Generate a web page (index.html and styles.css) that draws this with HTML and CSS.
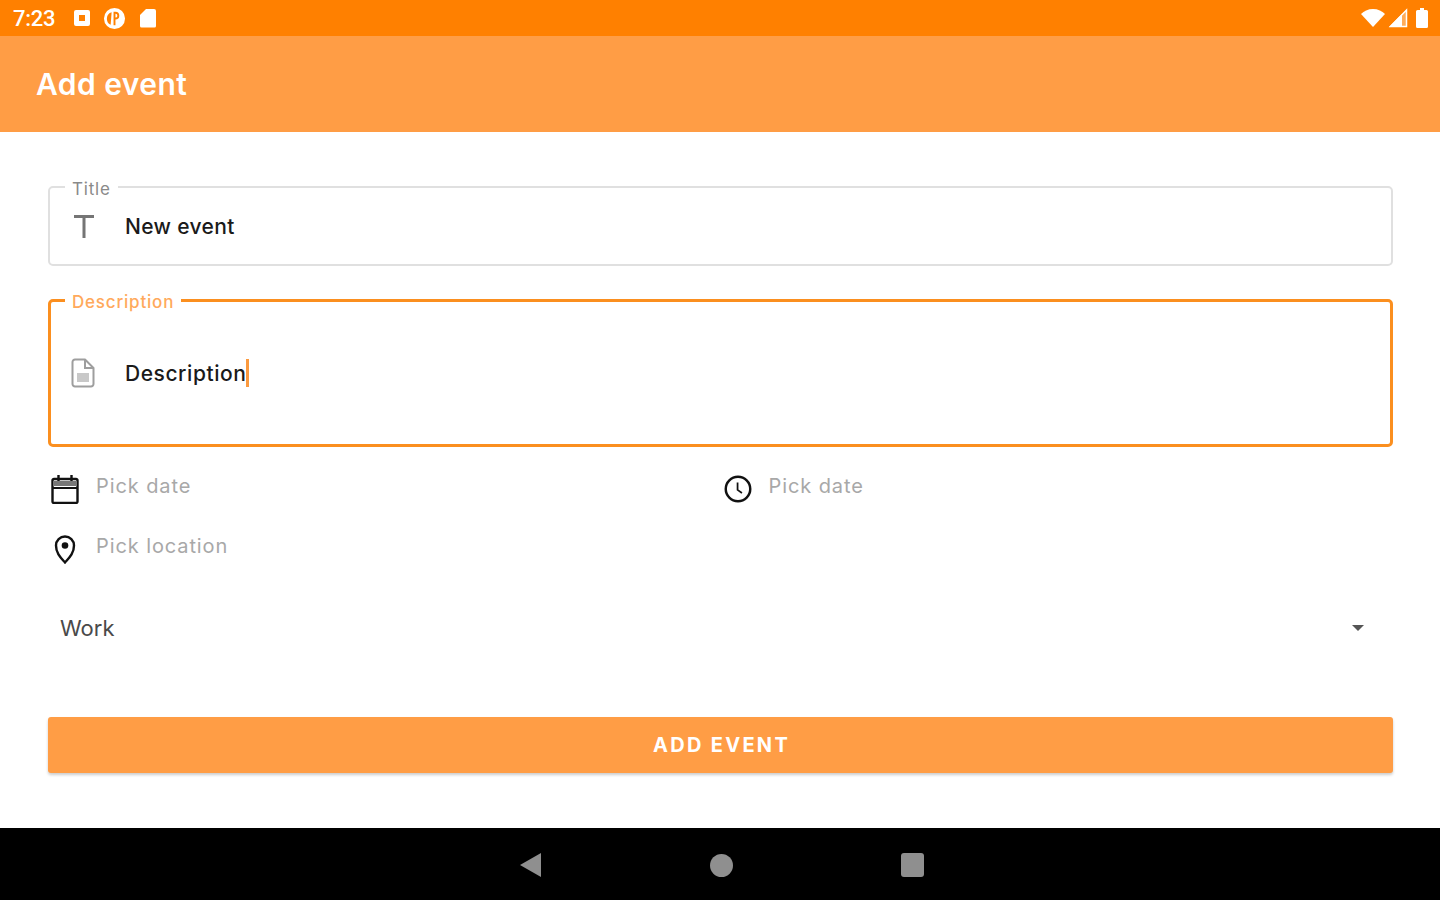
FILE: index.html
```html
<!DOCTYPE html>
<html lang="en">
<head>
    <meta charset="UTF-8">
    <meta name="viewport" content="width=device-width, initial-scale=1.0">
    <title>Add event</title>
    <link rel="stylesheet" href="styles.css">
</head>
<body>
    <div class="status-bar">
        <div class="status-left">
            <span class="clock">7:23</span>
            <svg class="status-icon" viewBox="0 0 20 20"><path fill="#fff" fill-rule="evenodd" d="M4 2h12a2 2 0 0 1 2 2v12a2 2 0 0 1-2 2H4a2 2 0 0 1-2-2V4a2 2 0 0 1 2-2zm3 5v6h6V7z"/></svg>
            <svg class="status-icon round" viewBox="0 0 24 24"><path fill="#fff" fill-rule="evenodd" d="M12 1a11 11 0 1 1 0 22 11 11 0 0 1 0-22zM9 5.500a7 7 0 0 0-1 13zM11 5v14h2v-6a4 4 0 0 0 0-8zm2 2v4a2 2 0 0 0 0-4z"/></svg>
            <svg class="status-icon" viewBox="0 0 20 20"><path fill="#fff" d="M8 1h8a2 2 0 0 1 2 2v15a1.500 1.500 0 0 1-1.500 1.500h-13A1.500 1.500 0 0 1 2 18V7z"/></svg>
        </div>
        <div class="status-right">
            <svg class="wifi" viewBox="0 0 24 18"><path fill="#fff" d="M12 18 0 5C3 2 7 0 12 0s9 2 12 5z"/></svg>
            <svg class="signal" viewBox="0 0 20 20"><path fill="#fff" fill-opacity="0.35" d="M19 1v18H1z"/><path fill="#fff" d="M14 6v13H1z"/><path fill="none" stroke="#fff" stroke-width="1.500" d="M18.500 2v16.500H2.500z"/></svg>
            <svg class="battery" viewBox="0 0 12 20"><path fill="#fff" d="M4 0h4v2h2.500A1.500 1.500 0 0 1 12 3.500V18.500a1.500 1.500 0 0 1-1.500 1.500h-9A1.500 1.500 0 0 1 0 18.500V3.500A1.500 1.500 0 0 1 1.500 2H4z"/></svg>
        </div>
    </div>

    <header class="app-bar">
        <h1>Add event</h1>
    </header>

    <main class="content">
        <div class="field title-field">
            <span class="field-label">Title</span>
            <svg class="field-icon" viewBox="0 0 24 30"><path fill="#757575" d="M2 4h20v3h-8.500v20h-3V7H2z"/></svg>
            <span class="field-value">New event</span>
        </div>

        <div class="field description-field">
            <span class="field-label">Description</span>
            <svg class="field-icon" viewBox="0 0 24 30"><path fill="none" stroke="#9e9e9e" stroke-width="2" stroke-linejoin="round" d="M4 1.500h10l8.500 8.500v16a2.500 2.500 0 0 1-2.500 2.500H4A2.500 2.500 0 0 1 1.500 26V4A2.500 2.500 0 0 1 4 1.500z"/><path fill="none" stroke="#9e9e9e" stroke-width="2" d="M14 1.500V10h8.500"/><path fill="#c8c8c8" d="M6 15h12v9H6z"/></svg>
            <span class="field-value">Description</span><span class="caret"></span>
        </div>

        <div class="pickers">
            <div class="picker">
                <svg class="picker-icon" viewBox="0 0 28 30"><path fill="none" stroke="#111" stroke-width="2.400" d="M3 5h22a1.500 1.500 0 0 1 1.500 1.500v21a1.500 1.500 0 0 1-1.500 1.500H3a1.500 1.500 0 0 1-1.500-1.500v-21A1.500 1.500 0 0 1 3 5zM7.500 1v6M20.500 1v6"/><path fill="#777" d="M2 7h24v5H2z"/><path fill="#111" d="M2 13h24v2H2z"/></svg>
                <span class="picker-text">Pick date</span>
            </div>
            <div class="picker">
                <svg class="picker-icon" viewBox="0 0 32 32"><circle cx="16" cy="16" r="14" fill="none" stroke="#111" stroke-width="2.800"/><path fill="none" stroke="#111" stroke-width="2" d="M15.500 8.500V17l5 3.500"/></svg>
                <span class="picker-text">Pick date</span>
            </div>
            <div class="picker">
                <svg class="picker-icon" viewBox="0 0 28 30"><path fill="none" stroke="#111" stroke-width="2.400" d="M14 28.500C10 24 5 19.500 5 11.500a9 9 0 0 1 18 0c0 8-5 12.500-9 17z"/><circle cx="14" cy="11.500" r="3.300" fill="#111"/></svg>
                <span class="picker-text">Pick location</span>
            </div>
        </div>

        <div class="dropdown">
            <span>Work</span>
            <span class="dropdown-arrow"></span>
        </div>

        <button class="add-btn" type="button">ADD EVENT</button>
    </main>

    <nav class="nav-bar">
        <svg class="nav-icon" viewBox="0 0 24 26"><path fill="#8f8f8f" d="M22 1v24L1 13z"/></svg>
        <span class="nav-circle"></span>
        <span class="nav-square"></span>
    </nav>
</body>
</html>
```

FILE: styles.css
```css
* {
    box-sizing: border-box;
}

body {
    margin: 0;
    height: 900px;
    overflow: hidden;
    display: flex;
    flex-direction: column;
    background-color: white;
    font-family: "Inter", "Roboto", sans-serif;
}

.status-bar {
    height: 36px;
    flex-shrink: 0;
    background-color: #ff8000;
    display: flex;
    align-items: center;
    justify-content: space-between;
    padding: 0 12px 0 13px;
    color: white;
}

.status-left {
    display: flex;
    align-items: center;
}

.clock {
    font-family: "Roboto", sans-serif;
    font-size: 22px;
    font-weight: 500;
    letter-spacing: -0.3px;
    width: 59px;
}

.status-icon {
    width: 20px;
    height: 20px;
    margin-right: 12px;
}

.status-icon.round {
    width: 23px;
    height: 23px;
    margin-left: -1px;
}

.status-right {
    display: flex;
    align-items: center;
    gap: 3px;
}

.wifi {
    width: 24px;
    height: 18px;
}

.signal {
    width: 20px;
    height: 20px;
}

.battery {
    width: 12px;
    height: 20px;
    margin-left: 5px;
}

.app-bar {
    height: 96px;
    flex-shrink: 0;
    background-color: #ff9d45;
    display: flex;
    align-items: center;
    padding-left: 36px;
}

h1 {
    margin: 0;
    font-size: 30px;
    font-weight: 600;
    letter-spacing: 0.45px;
    color: white;
}

.content {
    flex: 1;
    padding: 54px 47px 0 48px;
    display: flex;
    flex-direction: column;
}

.field {
    position: relative;
    display: flex;
    align-items: center;
    padding-left: 22px;
    border-radius: 5px;
}

.title-field {
    height: 80px;
    border: 2px solid #e0e0e0;
    margin-bottom: 33px;
}

.description-field {
    height: 148px;
    border: 3px solid #fb8f1f;
    padding-left: 20px;
}

.field-label {
    position: absolute;
    top: -9px;
    left: 15px;
    padding: 0 7px;
    background-color: white;
    font-size: 17px;
    letter-spacing: 0.8px;
    line-height: 20px;
    color: #8a8a8a;
}

.description-field .field-label {
    top: -10px;
    left: 14px;
    color: #ffa95c;
    font-weight: 500;
}

.field-icon {
    width: 24px;
    height: 30px;
    flex-shrink: 0;
    margin-right: 29px;
}

.description-field .field-icon {
    margin-right: 30px;
}

.field-value {
    font-size: 21px;
    font-weight: 500;
    letter-spacing: 0.35px;
    color: #1a1a1a;
}

.description-field .field-value {
    letter-spacing: 0.55px;
}

.caret {
    width: 3px;
    height: 28px;
    background-color: #fb9a3f;
}

.pickers {
    display: grid;
    grid-template-columns: 1fr 1fr;
    grid-auto-rows: 60px;
    padding-top: 13px;
}

.picker {
    display: flex;
    align-items: flex-start;
    padding-left: 3px;
    padding-top: 14px;
}

.picker-icon {
    width: 28px;
    height: 30px;
    flex-shrink: 0;
    margin-right: 17px;
}

.picker-text {
    font-size: 20px;
    letter-spacing: 0.9px;
    line-height: 24px;
    color: #a8a8a8;
}

.dropdown {
    display: flex;
    align-items: center;
    justify-content: space-between;
    height: 40px;
    margin-top: 28px;
    padding: 0 28px 0 12px;
    font-size: 22px;
    color: #4a4a4a;
}

.dropdown-arrow {
    width: 0;
    height: 0;
    border-left: 6px solid transparent;
    border-right: 6px solid transparent;
    border-top: 6px solid #555;
    margin-right: 1px;
}

.add-btn {
    height: 56px;
    margin-top: 69px;
    padding-left: 8px;
    border: none;
    border-radius: 3px;
    background-color: #ff9d45;
    box-shadow: 0 2px 3px rgba(0, 0, 0, 0.2);
    color: white;
    font-family: inherit;
    font-size: 20px;
    font-weight: 700;
    letter-spacing: 2.300px;
}

.nav-bar {
    height: 72px;
    flex-shrink: 0;
    background-color: black;
    display: flex;
    align-items: center;
    justify-content: center;
    gap: 168px;
    padding-top: 2px;
    padding-left: 2px;
}

.nav-icon {
    width: 24px;
    height: 26px;
    margin-right: -1px;
}

.nav-circle {
    width: 23px;
    height: 23px;
    border-radius: 50%;
    background-color: #8f8f8f;
}

.nav-square {
    width: 23px;
    height: 24px;
    border-radius: 3px;
    background-color: #8f8f8f;
}
```
